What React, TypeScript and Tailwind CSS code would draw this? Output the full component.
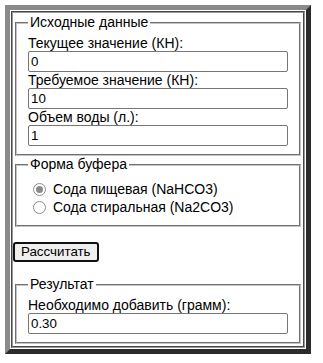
import React from "react";

function Radio({ checked }: { checked?: boolean }) {
  return (
    <span className="ml-[5px] mr-[7px] flex h-[13px] w-[13px] shrink-0 items-center justify-center rounded-full border border-[#8d8d8d] bg-white">
      {checked && <span className="h-[7px] w-[7px] rounded-full bg-[#8a8a8a]" />}
    </span>
  );
}

function Field({ label, value }: { label: string; value: string }) {
  return (
    <>
      <label className="block leading-[16px]">{label}</label>
      <div className="flex h-[21px] w-full items-center rounded-[2px] border border-[#767676] bg-white px-[2px] text-[13.33px]">
        {value}
      </div>
    </>
  );
}

export default function App() {
  return (
    <div className="h-[363px] w-[323px] bg-white pl-[5px] pt-[5px] font-['Liberation_Sans',Arial,sans-serif] text-[14px] text-black">
      <div className="w-[306px] border-[5px] border-t-[#8a8a8a] border-l-[#8a8a8a] border-r-[#2b2b2b] border-b-[#2b2b2b] bg-white p-px">
        <div className="border-2 border-[#9a9a9a] [border-style:groove] pb-[2px] pt-px">
          {/* Source data */}
          <fieldset className="mx-[2px] border-2 border-[#c4c4c4] px-[11px] pb-[8px] pt-[4px] [border-style:groove]">
            <legend className="px-[2px] leading-[17px]">Исходные данные</legend>
            <Field label="Текущее значение (КН):" value="0" />
            <Field label="Требуемое значение (КН):" value="10" />
            <Field label="Объем воды (л.):" value="1" />
          </fieldset>

          {/* Buffer form */}
          <fieldset className="mx-[2px] border-2 border-[#c4c4c4] px-[11px] pb-[9px] pt-[7px] [border-style:groove]">
            <legend className="px-[2px] leading-[17px]">Форма буфера</legend>
            <div className="flex h-[18px] items-center">
              <Radio checked />
              <span>Сода пищевая (NaHCO3)</span>
            </div>
            <div className="flex h-[18px] items-center">
              <Radio />
              <span>Сода стиральная (Na2CO3)</span>
            </div>
          </fieldset>

          <button className="mt-[15px] h-[20px] rounded-[3px] border-2 border-[#111] bg-[#efefef] px-[6px] text-[13.33px] leading-none">
            Рассчитать
          </button>

          {/* Result */}
          <fieldset className="mx-[2px] mt-[14px] border-2 border-[#c4c4c4] px-[11px] pb-[8px] pt-[4px] [border-style:groove]">
            <legend className="px-[2px] leading-[17px]">Результат</legend>
            <Field label="Необходимо добавить (грамм):" value="0.30" />
          </fieldset>
        </div>
      </div>
    </div>
  );
}
